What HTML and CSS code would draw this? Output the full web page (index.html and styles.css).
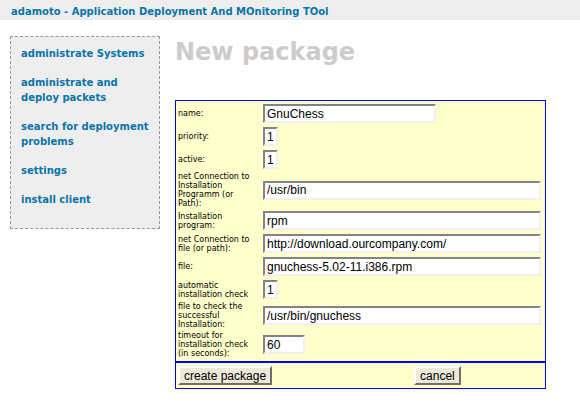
FILE: index.html
```html
<!DOCTYPE html>
<html lang="en">
<head>
  <meta charset="UTF-8"/>
  <title>adamoto - New package</title>
  <link rel="stylesheet" href="styles.css">
</head>
<body>

  <div class="top">adamoto - Application Deployment And MOnitoring TOol</div>

  <div class="main">
    <!-- Menu -->
    <div class="menu">
      <a href="#">administrate Systems</a>
      <a href="#">administrate and deploy packets</a>
      <a href="#">search for deployment problems</a>
      <a href="#">settings</a>
      <a href="#">install client</a>
    </div>

    <div class="content">
      <h1>New package</h1>

      <form class="pkg">
        <table class="fields">
          <tr>
            <td class="lbl">name:</td>
            <td><input type="text" class="mid" value="GnuChess"/></td>
          </tr>
          <tr>
            <td class="lbl">priority:</td>
            <td><input type="text" class="tiny" value="1"/></td>
          </tr>
          <tr>
            <td class="lbl">active:</td>
            <td><input type="text" class="tiny" value="1"/></td>
          </tr>
          <tr>
            <td class="lbl">net Connection to Installation Programm (or Path):</td>
            <td><input type="text" class="long" value="/usr/bin"/></td>
          </tr>
          <tr>
            <td class="lbl">Installation program:</td>
            <td><input type="text" class="long" value="rpm"/></td>
          </tr>
          <tr>
            <td class="lbl">net Connection to file (or path):</td>
            <td><input type="text" class="long" value="http://download.ourcompany.com/"/></td>
          </tr>
          <tr>
            <td class="lbl">file:</td>
            <td><input type="text" class="long" value="gnuchess-5.02-11.i386.rpm"/></td>
          </tr>
          <tr>
            <td class="lbl">automatic installation check</td>
            <td><input type="text" class="tiny" value="1"/></td>
          </tr>
          <tr>
            <td class="lbl">file to check the successful Installation:</td>
            <td><input type="text" class="long" value="/usr/bin/gnuchess"/></td>
          </tr>
          <tr>
            <td class="lbl">timeout for installation check (in seconds):</td>
            <td><input type="text" class="short" value="60"/></td>
          </tr>
        </table>

        <div class="actions">
          <button type="button">create package</button>
          <button type="button" class="cancel">cancel</button>
        </div>
      </form>
    </div>
  </div>

</body>
</html>
```

FILE: styles.css
```css
body {
  font-family: "DejaVu Sans", Verdana, sans-serif;
  margin: 0;
  padding: 0;
  background: white;
}

.top {
  background: #eeeeee;
  color: #0a74a8;
  font-size: 10px;
  font-weight: bold;
  line-height: 14px;
  padding: 5px 11px 1px;
}

.main {
  display: flex;
  align-items: flex-start;
  padding: 16px 0 0 10px;
}

/* Menu */
.menu {
  width: 150px;
  box-sizing: border-box;
  background: #eeeeee;
  border: 1px dashed #999999;
  padding: 9px 8px 7px 10px;
}

.menu a {
  display: block;
  color: #0a74a8;
  font-size: 10px;
  font-weight: bold;
  line-height: 15px;
  text-decoration: none;
  margin-bottom: 14px;
}

.content {
  margin-left: 15px;
}

h1 {
  color: #cccccc;
  font-size: 24px;
  line-height: 28px;
  margin: 2px 0 34px;
}

/* Form */
.pkg {
  width: 371px;
  box-sizing: border-box;
  background: #ffffcc;
  border: 1px solid #0000ff;
  padding-top: 1px;
  margin: 0;
}

.fields {
  border-collapse: collapse;
  margin-bottom: 2px;
}

.fields td {
  padding: 2px;
}

.fields td.lbl {
  width: 79px;
  padding: 1px 4px 1px 2px;
  font-size: 8px;
  line-height: 9px;
}

input {
  box-sizing: border-box;
  height: 19px;
  font-family: "Liberation Sans", Arial, sans-serif;
  font-size: 12px;
  padding: 1px 2px;
  border: 2px solid;
  border-color: #848284 #f0f0f0 #f0f0f0 #848284;
  background: white;
  margin: 0;
  display: block;
}

input.tiny { width: 15px; }
input.short { width: 42px; }
input.mid { width: 173px; }
input.long { width: 278px; }

.actions {
  display: flex;
  border-top: 2px solid #0000ff;
  padding: 3px 2px 3px;
}

button {
  height: 19px;
  font-family: "Liberation Sans", Arial, sans-serif;
  font-size: 12px;
  padding: 0 4px;
  background: #ece9d8;
  border: 2px solid;
  border-color: #ffffff #716f64 #716f64 #ffffff;
  color: black;
}

button.cancel {
  margin-left: 142px;
}
```
